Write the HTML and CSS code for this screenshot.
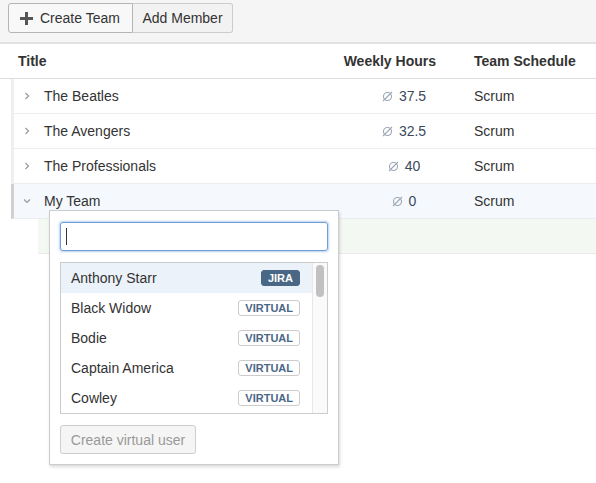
FILE: index.html
```html
<!DOCTYPE html>
<html>
<head>
<meta charset="utf-8">
<link rel="stylesheet" href="styles.css">
</head>
<body>
<div class="toolbar">
  <div class="btn-group">
    <button class="btn btn-active"><svg class="plus" width="13" height="13" viewBox="0 0 13 13"><path d="M5 0h3v5h5v3H8v5H5V8H0V5h5z" fill="#555"/></svg>Create Team</button>
    <button class="btn btn-add">Add Member</button>
  </div>
</div>
<div class="table">
  <div class="thead">
    <div class="c-title">Title</div>
    <div class="c-hours">Weekly Hours</div>
    <div class="c-sched">Team Schedule</div>
  </div>
  <div class="rows">
    <div class="row">
      <div class="c-title"><svg class="chev" width="6" height="8" viewBox="0 0 6 8"><path d="M1.5 1l3 3-3 3" fill="none" stroke="#999" stroke-width="1.2"/></svg>The Beatles</div>
      <div class="c-val"><svg class="empty" width="11" height="11" viewBox="0 0 11 11"><circle cx="5.5" cy="5.5" r="4" fill="none" stroke="#9aa6b4" stroke-width="1.1"/><path d="M1 10L10 1" stroke="#9aa6b4" stroke-width="1.1"/></svg>37.5</div>
      <div class="c-sched">Scrum</div>
    </div>
    <div class="row">
      <div class="c-title"><svg class="chev" width="6" height="8" viewBox="0 0 6 8"><path d="M1.5 1l3 3-3 3" fill="none" stroke="#999" stroke-width="1.2"/></svg>The Avengers</div>
      <div class="c-val"><svg class="empty" width="11" height="11" viewBox="0 0 11 11"><circle cx="5.5" cy="5.5" r="4" fill="none" stroke="#9aa6b4" stroke-width="1.1"/><path d="M1 10L10 1" stroke="#9aa6b4" stroke-width="1.1"/></svg>32.5</div>
      <div class="c-sched">Scrum</div>
    </div>
    <div class="row">
      <div class="c-title"><svg class="chev" width="6" height="8" viewBox="0 0 6 8"><path d="M1.5 1l3 3-3 3" fill="none" stroke="#999" stroke-width="1.2"/></svg>The Professionals</div>
      <div class="c-val"><svg class="empty" width="11" height="11" viewBox="0 0 11 11"><circle cx="5.5" cy="5.5" r="4" fill="none" stroke="#9aa6b4" stroke-width="1.1"/><path d="M1 10L10 1" stroke="#9aa6b4" stroke-width="1.1"/></svg>40</div>
      <div class="c-sched">Scrum</div>
    </div>
    <div class="row row-open">
      <div class="c-title"><svg class="chev" width="8" height="6" viewBox="0 0 8 6"><path d="M1 1.5l3 3 3-3" fill="none" stroke="#999" stroke-width="1.2"/></svg>My Team</div>
      <div class="c-val"><svg class="empty" width="11" height="11" viewBox="0 0 11 11"><circle cx="5.5" cy="5.5" r="4" fill="none" stroke="#9aa6b4" stroke-width="1.1"/><path d="M1 10L10 1" stroke="#9aa6b4" stroke-width="1.1"/></svg>0</div>
      <div class="c-sched">Scrum</div>
    </div>
  </div>
  <div class="new-row"></div>
</div>

<div class="popup">
  <div class="search"><span class="caret"></span></div>
  <div class="list">
    <div class="items">
      <div class="item item-hl"><span>Anthony Starr</span><span class="badge badge-jira">JIRA</span></div>
      <div class="item"><span>Black Widow</span><span class="badge">VIRTUAL</span></div>
      <div class="item"><span>Bodie</span><span class="badge">VIRTUAL</span></div>
      <div class="item"><span>Captain America</span><span class="badge">VIRTUAL</span></div>
      <div class="item"><span>Cowley</span><span class="badge">VIRTUAL</span></div>
    </div>
    <div class="scrollbar"><div class="thumb"></div></div>
  </div>
  <button class="btn-disabled">Create virtual user</button>
</div>
</body>
</html>
```

FILE: styles.css
```css
* { box-sizing: border-box; }
html, body { height: 100%; }
body {
  margin: 0;
  min-height: 483px;
  font-family: "Liberation Sans", Arial, sans-serif;
  font-size: 14px;
  color: #333;
  background: #fff;
  position: relative;
}
.toolbar {
  height: 44px;
  background: #f5f5f5;
  border-bottom: 2px solid #e2e2e2;
  padding: 3px 8px;
}
.btn-group { display: flex; }
.btn {
  height: 30px;
  font-family: inherit;
  font-size: 14px;
  color: #333;
  background: #f2f2f2;
  border: 1px solid #ccc;
  padding: 0;
  display: flex;
  align-items: center;
  margin: 0;
}
.btn:first-child { border-radius: 3px 0 0 3px; }
.btn:last-child { border-radius: 0 3px 3px 0; border-left: none; }
.btn-active {
  width: 125px;
  background: #f8f8f8;
  border-color: #b5b5b5;
  padding-left: 11px;
}
.btn-add { width: 100px; justify-content: center; }
.plus { margin-right: 7px; }

.thead {
  display: flex;
  height: 35px;
  align-items: center;
  border-bottom: 1px solid #ddd;
  font-weight: bold;
}
.thead .c-title { padding-left: 18px; flex: 1; }
.thead .c-hours { width: 134px; text-align: right; padding-right: 34px; }
.thead .c-sched { width: 126px; padding-left: 4px; }

.rows { margin-left: 11px; }
.row {
  display: flex;
  height: 35px;
  align-items: center;
  border-left: 3px solid #efefef;
  border-bottom: 1px solid #ececec;
}
.row .c-title { flex: 1; display: flex; align-items: center; padding-left: 10px; }
.chev { margin-right: 14px; }
.row-open .chev { margin-left: -1px; margin-right: 13px; }
.row .c-val {
  width: 134px;
  display: flex;
  justify-content: center;
  align-items: center;
  color: #3b4a5c;
  padding-left: 2px;
}
.empty { margin-right: 6px; }
.row .c-sched { width: 126px; padding-left: 4px; }
.row-open {
  background: #f5f9fd;
  border-left-color: #d0d0d0;
  border-bottom-color: #e8eef0;
}
.new-row {
  margin-left: 38px;
  height: 35px;
  background: #f3f8f3;
  border-bottom: 1px solid #eaeaea;
}

.popup {
  position: absolute;
  left: 49px;
  top: 210px;
  width: 290px;
  height: 255px;
  background: #fff;
  border: 1px solid #ccc;
  box-shadow: 1px 2px 3px rgba(0,0,0,0.15);
  padding: 11px 10px 0;
}
.search {
  height: 29px;
  border: 1px solid #6f9fd6;
  border-radius: 3px;
  box-shadow: 0 0 2px 1px rgba(95,150,215,0.45);
  padding: 5px 0 0 5px;
}
.caret {
  display: block;
  width: 1px;
  height: 17px;
  background: #333;
}
.list {
  margin-top: 11px;
  height: 152px;
  border: 1px solid #ccc;
  display: flex;
}
.items { flex: 1; }
.item {
  height: 30px;
  display: flex;
  align-items: center;
  justify-content: space-between;
  padding: 0 12px 0 10px;
}
.item-hl { background: #ebf2f9; }
.badge {
  font-size: 11px;
  font-weight: bold;
  color: #4a6785;
  border: 1px solid #ccc;
  border-radius: 3px;
  height: 16px;
  line-height: 14px;
  padding: 0 6px;
  background: #fff;
}
.badge-jira {
  background: #4a6785;
  color: #fff;
  border-color: #4a6785;
}
.scrollbar {
  width: 15px;
  border-left: 1px solid #e8e8e8;
  background: #fafafa;
  padding: 2px 0 0 3px;
}
.thumb {
  width: 8px;
  height: 32px;
  border-radius: 4px;
  background: #c1c1c1;
}
.btn-disabled {
  margin-top: 11px;
  height: 29px;
  width: 136px;
  font-family: inherit;
  font-size: 14px;
  color: #999;
  background: #f5f5f5;
  border: 1px solid #ccc;
  border-radius: 3px;
  padding: 0;
  display: block;
}
```
